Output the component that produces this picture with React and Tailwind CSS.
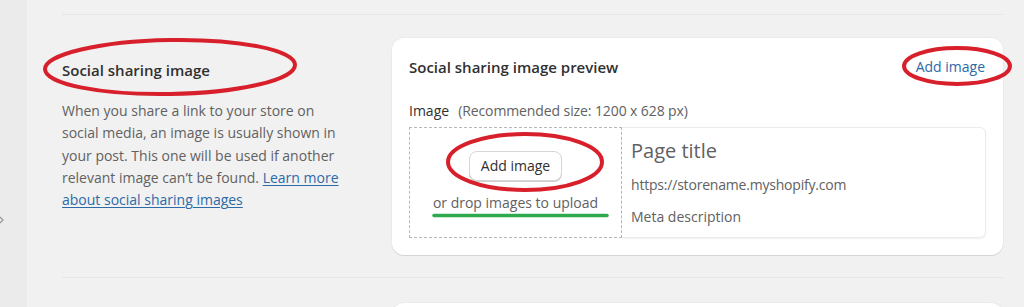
import React from "react";

export default function App() {
  return (
    <div
      className="relative flex w-[1024px] h-[307px] overflow-hidden bg-[#f1f1f1] text-[#303030]"
      style={{ fontFamily: '"Open Sans", "Noto Sans", sans-serif' }}
    >
      {/* left sidebar strip */}
      <div className="relative w-[27px] shrink-0 bg-[#ebebeb]">
        <svg className="absolute left-[-2px] top-[215px]" width="8" height="10" viewBox="0 0 8 10">
          <path d="M2 2 L5 5 L2 8" fill="none" stroke="#9a9a9a" strokeWidth="1.3" />
        </svg>
      </div>

      {/* main */}
      <div className="flex-1 pl-[35px] pr-[21px]">
        <div className="h-[14px]" />
        <div className="border-t border-[#e6e6e6]" />
        <div className="flex pt-[23px]">
          {/* left column */}
          <div className="w-[330px] shrink-0 pt-[22px] pr-[46px]">
            <h2 className="text-[15px] font-semibold leading-[20px] text-[#303030]">Social sharing image</h2>
            <p className="mt-[20px] text-[14px] leading-[22.3px] text-[#616161]">
              When you share a link to your store on social media, an image is usually shown in your
              post. This one will be used if another relevant image can’t be found.{" "}
              <a className="text-[#2c6aa8] underline underline-offset-2">Learn more about social sharing images</a>
            </p>
          </div>

          {/* card */}
          <div className="flex-1 rounded-[12px] bg-white px-[17px] pt-[19px] pb-[17px] shadow-[0_1px_0_#d4d4d4,0_0_0_1px_#ebebeb]">
            <div className="flex items-center justify-between h-[20px]">
              <h2 className="text-[15px] font-semibold leading-[20px] text-[#303030]">
                Social sharing image preview
              </h2>
              <a className="text-[14px] leading-[20px] text-[#2c6aa8] mr-[1px]">Add image</a>
            </div>
            <div className="mt-[25px] flex items-center gap-[9px] text-[14px] leading-[18px]">
              <span className="text-[#303030]">Image</span>
              <span className="text-[#616161] tracking-[-0.1px]">(Recommended size: 1200 x 628 px)</span>
            </div>
            <div className="mt-[7px] flex h-[111px]">
              <div className="flex w-[213px] shrink-0 flex-col items-center justify-center border border-dashed border-[#b8b8b8]">
                <button className="mt-[-2px] h-[30px] w-[93px] rounded-[8px] border border-[#d6d6d6] bg-white text-[14px] text-[#303030] shadow-[0_1px_0_#cfcfcf]">
                  Add image
                </button>
                <div className="mt-[12px] text-[14px] leading-[20px] text-[#616161]">or drop images to upload</div>
              </div>
              <div className="flex-1 rounded-r-[6px] border border-l-0 border-[#ebebeb] pl-[9px] shadow-[0_1px_2px_rgba(0,0,0,0.06)]">
                <div className="mt-[10px] text-[20px] leading-[26px] text-[#616161]">Page title</div>
                <div className="mt-[12px] text-[14px] leading-[18px] text-[#616161] tracking-[-0.2px]">https://storename.myshopify.com</div>
                <div className="mt-[14px] text-[14px] leading-[18px] text-[#616161]">Meta description</div>
              </div>
            </div>
          </div>
        </div>
        <div className="mt-[22px] border-t border-[#e6e6e6]" />
        <div className="ml-[330px] mt-[25px] h-[40px] rounded-t-[12px] bg-white shadow-[0_0_0_1px_#ebebeb]" />
      </div>

      {/* annotation overlay */}
      <svg className="pointer-events-none absolute left-0 top-0" width="1024" height="307" viewBox="0 0 1024 307">
        <ellipse cx="170" cy="67" rx="125" ry="27" transform="rotate(-1 170 67)" fill="none" stroke="#d7202b" strokeWidth="4" />
        <ellipse cx="957" cy="66" rx="53" ry="18" fill="none" stroke="#d7202b" strokeWidth="4" />
        <ellipse cx="525" cy="162" rx="77" ry="28" fill="none" stroke="#d7202b" strokeWidth="4" />
        <line x1="434" y1="215.5" x2="607" y2="215.5" stroke="#2eaa4c" strokeWidth="3.5" strokeLinecap="round" />
      </svg>
    </div>
  );
}
